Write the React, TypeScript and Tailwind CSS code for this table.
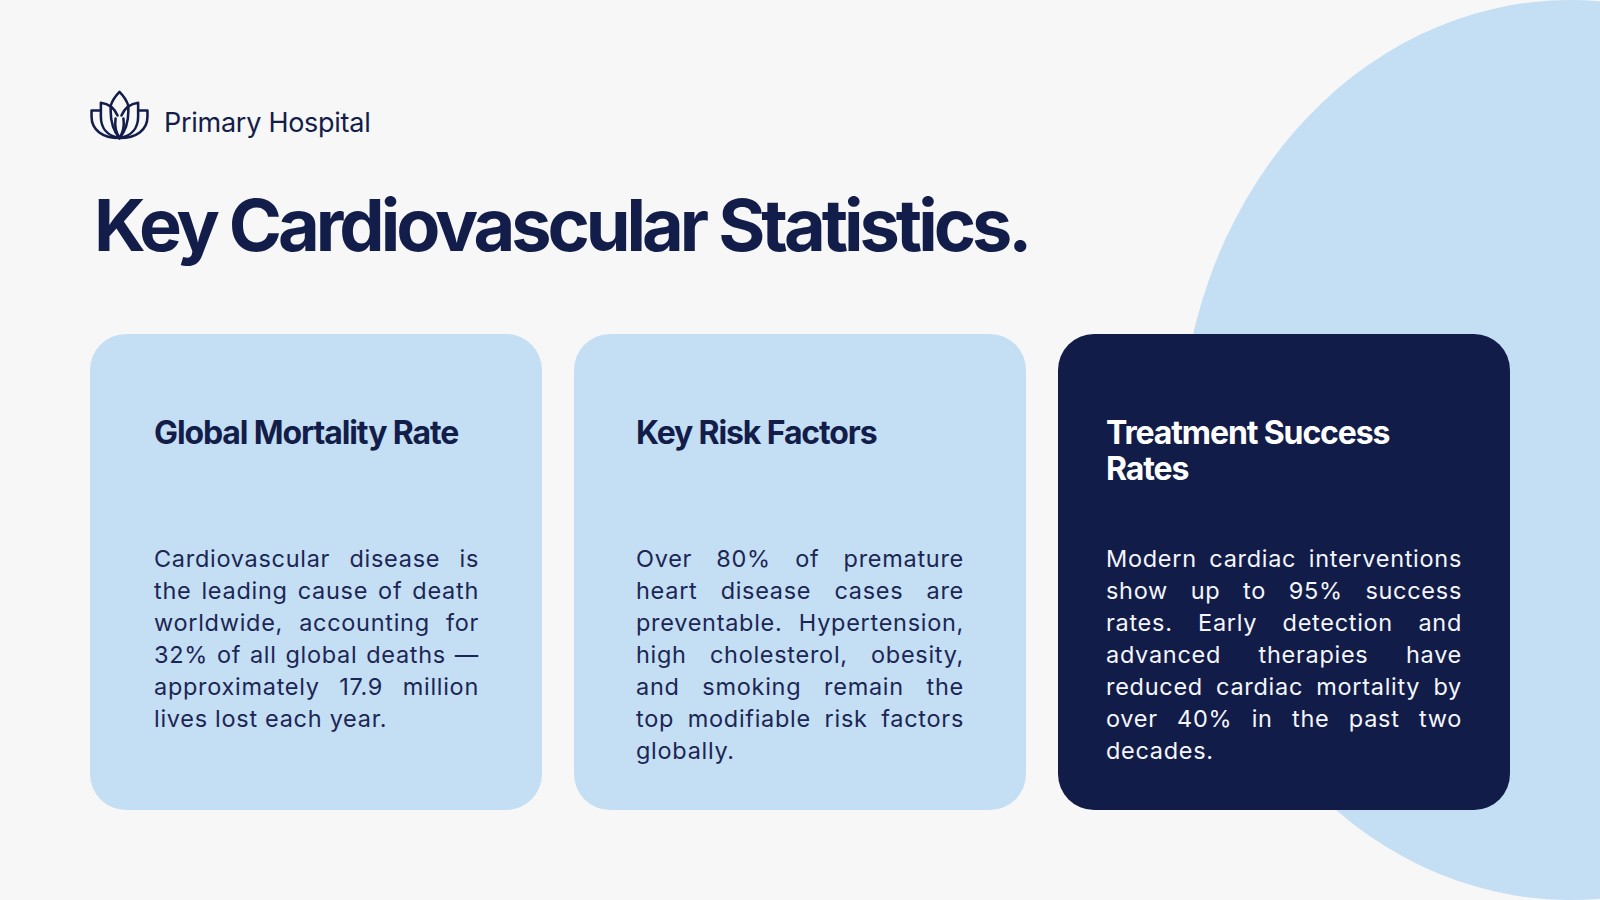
import React from "react";

function Logo() {
  return (
    <svg width="59" height="51" viewBox="0 0 60 52" fill="none" stroke="#131d4a" strokeWidth="2.6" strokeLinecap="round" strokeLinejoin="round">
      {/* center petal */}
      <path d="M30 49 C24 42 21 32 21 22 L21 16 C23 10 27 5 30 2 C33 5 37 10 39 16 L39 22 C39 32 36 42 30 49 Z" />
      {/* inner lines */}
      <path d="M30 49 C26 43 25 36 26 29" />
      <path d="M30 49 C34 43 35 36 34 29" />
      {/* middle petals */}
      <path d="M30 49 C18 47 11 39 11 27 L11 13 C19 14 25 19 28 26" />
      <path d="M30 49 C42 47 49 39 49 27 L49 13 C41 14 35 19 32 26" />
      {/* outer petals */}
      <path d="M30 49 C13 49 1.5 41 1.5 27 L1.5 21 L11 21" />
      <path d="M30 49 C47 49 58.5 41 58.5 27 L58.5 21 L49 21" />
    </svg>
  );
}

type CardProps = { title: React.ReactNode; lines: string[]; dark?: boolean; pad: string };

function Card({ title, lines, dark, pad }: CardProps) {
  return (
    <div
      className={
        (dark
          ? "rounded-[36px] bg-[#121c48] pt-[81px] text-white "
          : "rounded-[36px] bg-[#c4def4] pt-[81px] text-[#131d4a] ") + pad
      }
    >
      <div className="h-[128px]">
        <h2 className="text-[32px] leading-[36px] font-bold tracking-[-0.035em]">{title}</h2>
      </div>
      <p
        className={
          dark
            ? "text-[23.5px] leading-[32px] tracking-[0.03em] text-[#f4f6fb]"
            : "text-[23.5px] leading-[32px] tracking-[0.03em] text-[#1c2654]"
        }
      >
        {lines.map((l, i) => (
          <span
            key={i}
            className={
              i < lines.length - 1
                ? "block whitespace-nowrap text-justify [text-align-last:justify]"
                : "block whitespace-nowrap"
            }
          >
            {l}
          </span>
        ))}
      </p>
    </div>
  );
}

export default function App() {
  return (
    <div className="relative w-[1600px] h-[900px] overflow-hidden bg-[#f7f7f7] font-['Inter',sans-serif] text-[#131d4a]">
      <div className="absolute left-[1180px] top-0 w-[780px] h-[900px] rounded-[50%] bg-[#c4def4]" />
      <div className="relative flex flex-col h-full p-[90px]">
        <div className="flex items-center gap-[15px] h-[50px]">
          <Logo />
          <span className="pt-[14px] text-[27px] leading-none text-[#131d4a] tracking-[-0.01em]">Primary Hospital</span>
        </div>
        <h1 className="mt-[49px] pl-[4px] text-[72px] leading-[72px] font-bold tracking-[-0.056em] text-[#131d4a]">
          Key Cardiovascular Statistics.
        </h1>
        <div className="mt-[73px] grid grid-cols-3 gap-[32px] flex-1">
          <Card
            pad="pl-[64px] pr-[63px]"
            title="Global Mortality Rate"
            lines={[
              "Cardiovascular disease is",
              "the leading cause of death",
              "worldwide, accounting for",
              "32% of all global deaths —",
              "approximately 17.9 million",
              "lives lost each year.",
            ]}
          />
          <Card
            pad="pl-[62px] pr-[62px]"
            title="Key Risk Factors"
            lines={[
              "Over 80% of premature",
              "heart disease cases are",
              "preventable. Hypertension,",
              "high cholesterol, obesity,",
              "and smoking remain the",
              "top modifiable risk factors",
              "globally.",
            ]}
          />
          <Card
            dark
            pad="pl-[48px] pr-[48px]"
            title={
              <>
                Treatment Success
                <br />
                Rates
              </>
            }
            lines={[
              "Modern cardiac interventions",
              "show up to 95% success",
              "rates. Early detection and",
              "advanced therapies have",
              "reduced cardiac mortality by",
              "over 40% in the past two",
              "decades.",
            ]}
          />
        </div>
      </div>
    </div>
  );
}
